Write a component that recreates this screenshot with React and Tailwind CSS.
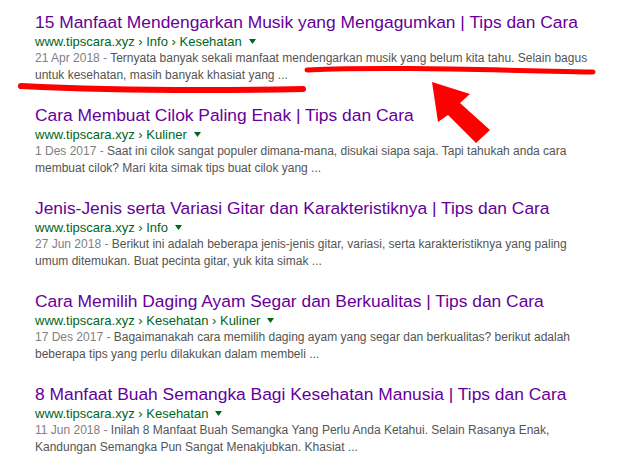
const results = [
  {
    title: '15 Manfaat Mendengarkan Musik yang Mengagumkan | Tips dan Cara',
    crumbs: ['Info', 'Kesehatan'],
    date: '21 Apr 2018',
    lines: [
      'Ternyata banyak sekali manfaat mendengarkan musik yang belum kita tahu. Selain bagus',
      'untuk kesehatan, masih banyak khasiat yang ...',
    ],
  },
  {
    title: 'Cara Membuat Cilok Paling Enak | Tips dan Cara',
    crumbs: ['Kuliner'],
    date: '1 Des 2017',
    lines: [
      'Saat ini cilok sangat populer dimana-mana, disukai siapa saja. Tapi tahukah anda cara',
      'membuat cilok? Mari kita simak tips buat cilok yang ...',
    ],
  },
  {
    title: 'Jenis-Jenis serta Variasi Gitar dan Karakteristiknya | Tips dan Cara',
    crumbs: ['Info'],
    date: '27 Jun 2018',
    lines: [
      'Berikut ini adalah beberapa jenis-jenis gitar, variasi, serta karakteristiknya yang paling',
      'umum ditemukan. Buat pecinta gitar, yuk kita simak ...',
    ],
  },
  {
    title: 'Cara Memilih Daging Ayam Segar dan Berkualitas | Tips dan Cara',
    crumbs: ['Kesehatan', 'Kuliner'],
    date: '17 Des 2017',
    lines: [
      'Bagaimanakah cara memilih daging ayam yang segar dan berkualitas? berikut adalah',
      'beberapa tips yang perlu dilakukan dalam membeli ...',
    ],
  },
  {
    title: '8 Manfaat Buah Semangka Bagi Kesehatan Manusia | Tips dan Cara',
    crumbs: ['Kesehatan'],
    date: '11 Jun 2018',
    lines: [
      'Inilah 8 Manfaat Buah Semangka Yang Perlu Anda Ketahui. Selain Rasanya Enak,',
      'Kandungan Semangka Pun Sangat Menakjubkan. Khasiat ...',
    ],
  },
];

function Result({ item }) {
  return (
    <div className="flex flex-col">
      <a className="text-[17.4px] leading-[22px] text-[#660099] whitespace-nowrap">{item.title}</a>
      <div className="flex items-center text-[13px] leading-[17px] text-[#006621] whitespace-nowrap">
        <span>www.tipscara.xyz{item.crumbs.map((c) => ` › ${c}`).join('')}</span>
        <svg width="7" height="5" viewBox="0 0 7 5" className="ml-[7px]">
          <path d="M0 0 L7 0 L3.5 5 Z" fill="#006621" />
        </svg>
      </div>
      <p className="text-[12px] leading-[17px] text-[#545454] whitespace-nowrap">
        <span className="text-[#808080]">{item.date} - </span>
        {item.lines[0]}
        <br />
        {item.lines[1]}
      </p>
    </div>
  );
}

export default function App() {
  return (
    <div
      className="relative w-[640px] h-[459px] overflow-hidden bg-white pl-[35px] pt-[11px]"
      style={{ fontFamily: '"Liberation Sans", Arial, sans-serif' }}
    >
      <div className="flex flex-col gap-[20px]">
        {results.map((r) => (
          <Result key={r.title} item={r} />
        ))}
      </div>

      <svg className="absolute inset-0 pointer-events-none" width="640" height="459" viewBox="0 0 640 459">
        <path d="M307 70 C 380 67, 450 69, 593 72" stroke="#ff0000" strokeWidth="5" strokeLinecap="round" fill="none" />
        <path d="M21 86 C 100 90, 200 91, 303 89" stroke="#ff0000" strokeWidth="6" strokeLinecap="round" fill="none" />
        <polygon points="432,82 470,94 460,103 490,130 476,143 448,115 438,122" fill="#ff0000" />
      </svg>
    </div>
  );
}
